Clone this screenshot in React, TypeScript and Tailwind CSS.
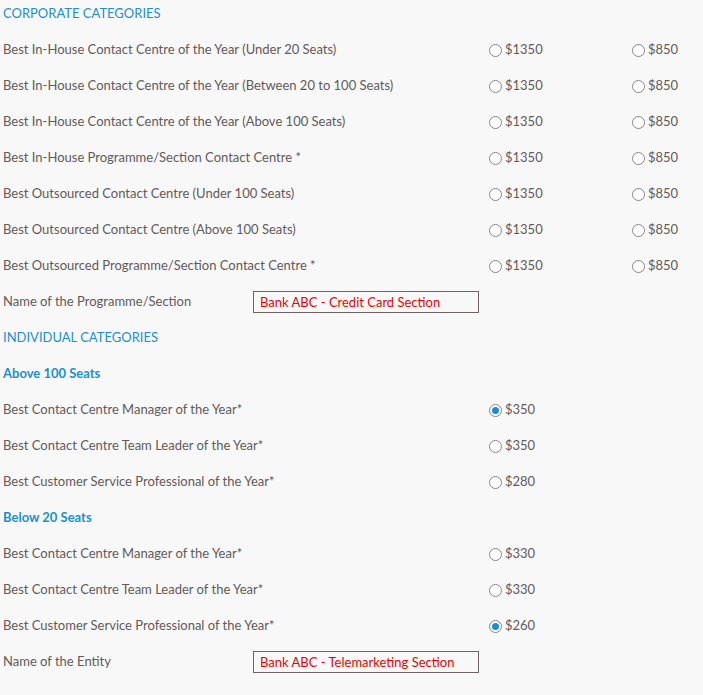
const font = { fontFamily: "Lato, 'Open Sans', sans-serif" };

type Row = { label: string; prices: [string, boolean][] };

const corporate: Row[] = [
  { label: "Best In-House Contact Centre of the Year (Under 20 Seats)", prices: [["$1350", false], ["$850", false]] },
  { label: "Best In-House Contact Centre of the Year (Between 20 to 100 Seats)", prices: [["$1350", false], ["$850", false]] },
  { label: "Best In-House Contact Centre of the Year (Above 100 Seats)", prices: [["$1350", false], ["$850", false]] },
  { label: "Best In-House Programme/Section Contact Centre *", prices: [["$1350", false], ["$850", false]] },
  { label: "Best Outsourced Contact Centre (Under 100 Seats)", prices: [["$1350", false], ["$850", false]] },
  { label: "Best Outsourced Contact Centre (Above 100 Seats)", prices: [["$1350", false], ["$850", false]] },
  { label: "Best Outsourced Programme/Section Contact Centre *", prices: [["$1350", false], ["$850", false]] },
];

const above: Row[] = [
  { label: "Best Contact Centre Manager of the Year*", prices: [["$350", true]] },
  { label: "Best Contact Centre Team Leader of the Year*", prices: [["$350", false]] },
  { label: "Best Customer Service Professional of the Year*", prices: [["$280", false]] },
];

const below: Row[] = [
  { label: "Best Contact Centre Manager of the Year*", prices: [["$330", false]] },
  { label: "Best Contact Centre Team Leader of the Year*", prices: [["$330", false]] },
  { label: "Best Customer Service Professional of the Year*", prices: [["$260", true]] },
];

const Radio = ({ price, checked }: { price: string; checked: boolean }) => (
  <div className="flex shrink-0 items-center w-[143px] gap-[3px]">
    <span className="flex items-center justify-center w-[13px] h-[13px] rounded-full border border-[#8c8686] bg-white">
      {checked && <span className="w-[7px] h-[7px] rounded-full bg-[#1b8fd2]" />}
    </span>
    <span>{price}</span>
  </div>
);

const PriceRow = ({ row }: { row: Row }) => (
  <div className="flex items-center h-9">
    <div className="w-[486px] shrink-0">{row.label}</div>
    {row.prices.map(([p, c], i) => (
      <Radio key={i} price={p} checked={c} />
    ))}
  </div>
);

const NameRow = ({ label, value }: { label: string; value: string }) => (
  <div className="flex items-center h-9">
    <div className="w-[250px] shrink-0">{label}</div>
    <div className="w-[226px] h-[22px] border border-[#6f6262] bg-[#f8f8f8] px-[6px] leading-[20px] text-[#ee0000]">
      {value}
    </div>
  </div>
);

const Heading = ({ children, bold }: { children: string; bold?: boolean }) => (
  <div className={`flex items-center h-9 text-[#1b8fd0] ${bold ? "font-bold" : ""}`}>{children}</div>
);

export default function App() {
  return (
    <div className="w-[703px] h-[695px] overflow-hidden bg-[#f8f8f8]">
      <div className="-mt-[4px] pl-[3px] text-[13px] text-[#625a5a]" style={font}>
        <Heading>CORPORATE CATEGORIES</Heading>
        {corporate.map((r, i) => (
          <PriceRow key={i} row={r} />
        ))}
        <NameRow label="Name of the Programme/Section" value="Bank ABC - Credit Card Section" />
        <Heading>INDIVIDUAL CATEGORIES</Heading>
        <Heading bold>Above 100 Seats</Heading>
        {above.map((r, i) => (
          <PriceRow key={i} row={r} />
        ))}
        <Heading bold>Below 20 Seats</Heading>
        {below.map((r, i) => (
          <PriceRow key={i} row={r} />
        ))}
        <NameRow label="Name of the Entity" value="Bank ABC - Telemarketing Section" />
      </div>
    </div>
  );
}
